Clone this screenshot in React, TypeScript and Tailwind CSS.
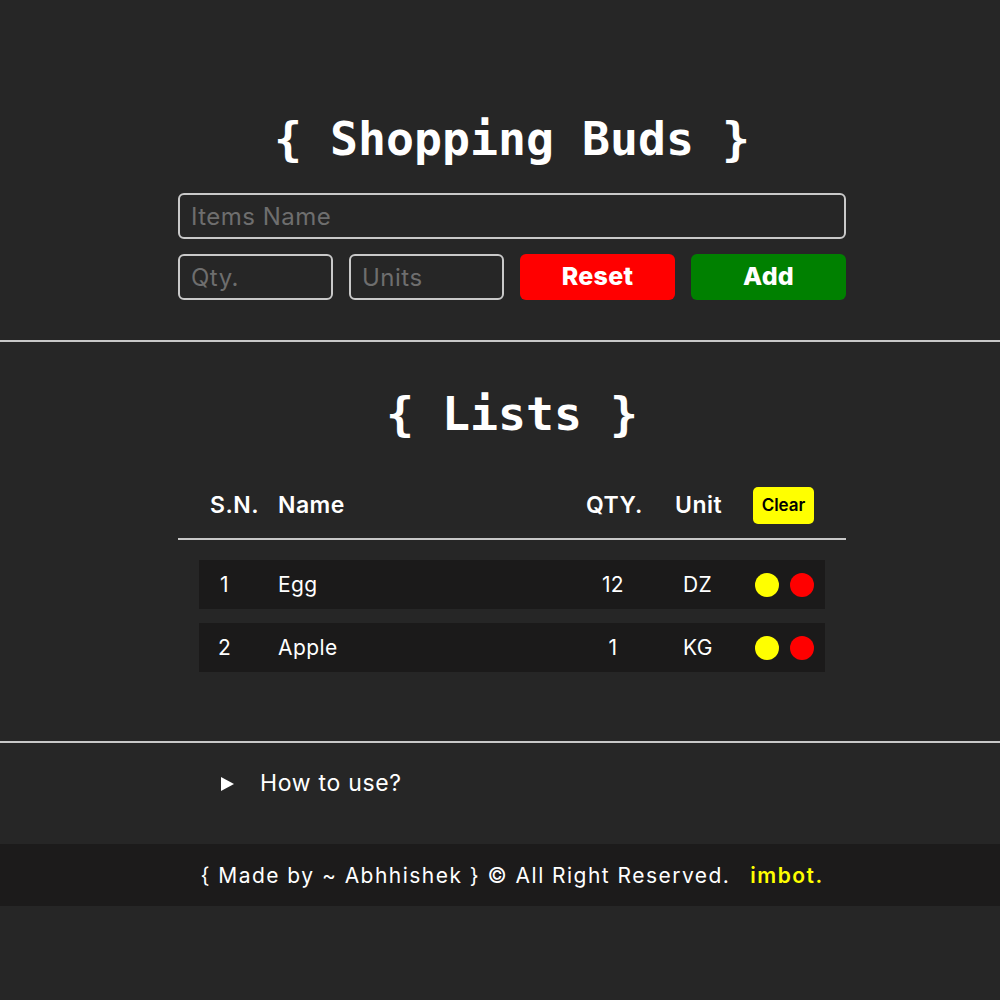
import React from "react";

const rows = [
  { sn: 1, name: "Egg", qty: "12", unit: "DZ" },
  { sn: 2, name: "Apple", qty: "1", unit: "KG" },
];

const inputCls =
  "h-[46px] w-full rounded-[6px] border-2 border-[#c9c9c9] bg-[#262626] px-[11px] text-[24px] tracking-[0.02em] text-white placeholder:text-[#6e6e6e] outline-none";

export default function App() {
  return (
    <div className="min-h-screen bg-[#262626] text-white font-['Inter','Noto_Sans',sans-serif]">
      {/* Top section */}
      <section className="pl-[24px] pt-[111px]">
        <div className="mx-auto w-[668px]">
          <h1 className="text-center font-['DejaVu_Sans_Mono',monospace] text-[46.5px] leading-[56px] font-bold">
            {"{ Shopping Buds }"}
          </h1>
          <div className="mt-[26px] flex flex-col gap-[15px]">
            <input placeholder="Items Name" className={inputCls} />
            <div className="grid grid-cols-4 gap-[16px]">
              <input placeholder="Qty." className={inputCls} />
              <input placeholder="Units" className={inputCls} />
              <button className="h-[46px] rounded-[6px] bg-[#ff0000] text-[25px] font-extrabold tracking-[0.01em] text-white">
                Reset
              </button>
              <button className="h-[46px] rounded-[6px] bg-[#008000] text-[25px] font-extrabold tracking-[0.01em] text-white">
                Add
              </button>
            </div>
          </div>
        </div>
      </section>

      <div className="mt-[40px] border-t-2 border-[#c8c8c8]" />

      {/* Lists section */}
      <section className="pl-[24px] pt-[44px]">
        <div className="mx-auto w-[668px]">
          <h2 className="text-center font-['DejaVu_Sans_Mono',monospace] text-[46.5px] leading-[56px] font-bold">
            {"{ Lists }"}
          </h2>
          <div className="mt-[45px] flex h-[37px] items-center px-[32px] text-[23px] font-semibold tracking-[0.02em]">
            <div className="w-[68px]">S.N.</div>
            <div className="flex-1">Name</div>
            <div className="w-[89px]">QTY.</div>
            <div className="w-[78px]">Unit</div>
            <button className="h-[37px] w-[61px] rounded-[5px] bg-[#ffff00] text-[17px] font-semibold tracking-normal text-black">
              Clear
            </button>
          </div>
          <div className="mt-[14px] border-t-2 border-[#c8c8c8]" />
          <div className="mt-[20px] flex flex-col gap-[14px] px-[21px]">
            {rows.map((r) => (
              <div
                key={r.sn}
                className="flex h-[49px] items-center bg-[#1b1a1a] text-[21px] tracking-[0.02em]"
              >
                <div className="w-[51px] text-center">{r.sn}</div>
                <div className="flex-1 pl-[28px]">{r.name}</div>
                <div className="w-[60px] text-center">{r.qty}</div>
                <div className="w-[104px] pl-[40px]">{r.unit}</div>
                <div className="flex gap-[11px] pl-[8px] pr-[11px]">
                  <span className="block h-[24px] w-[24px] rounded-full bg-[#ffff00]" />
                  <span className="block h-[24px] w-[24px] rounded-full bg-[#ff0000]" />
                </div>
              </div>
            ))}
          </div>
        </div>
      </section>

      <div className="mt-[69px] border-t-2 border-[#c8c8c8]" />

      {/* How to use */}
      <section className="pl-[24px] pt-[24px]">
        <div className="mx-auto w-[668px]">
          <div className="flex h-[33px] items-center pl-[43px] text-[23px] tracking-[0.03em]">
            <svg width="13" height="14" viewBox="0 0 13 14" className="mr-[26px]">
              <polygon points="0,0 13,7 0,14" fill="#ffffff" />
            </svg>
            <span>How to use?</span>
          </div>
        </div>
      </section>

      {/* Footer */}
      <footer className="mt-[44px] flex h-[62px] items-center justify-center bg-[#1c1b1b] pl-[24px] pt-[2px] text-[21px] tracking-[0.07em]">
        <span>{"{ Made by ~ Abhhishek } © All Right Reserved."}</span>
        <span className="ml-[20px] font-semibold text-[#ffff00]">imbot.</span>
      </footer>
    </div>
  );
}
